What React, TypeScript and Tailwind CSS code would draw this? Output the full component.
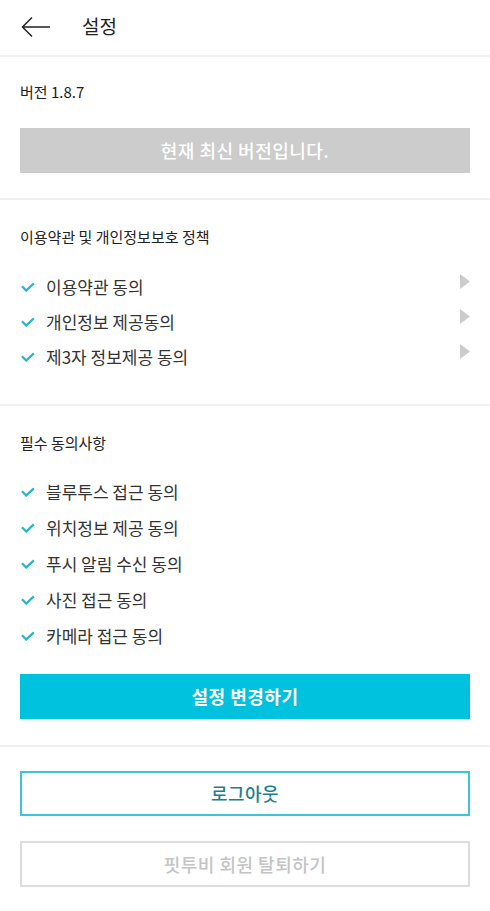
import React from "react";

const font = { fontFamily: '"Noto Sans CJK KR", "Noto Sans", sans-serif' };

function Check() {
  return (
    <svg width="14" height="10" viewBox="0 0 14 10" className="shrink-0">
      <path d="M1 4.3 L5.2 8.5 L12.8 1.3" fill="none" stroke="#2bb5c8" strokeWidth="2.3" />
    </svg>
  );
}

function Tri() {
  return (
    <svg width="10" height="15" viewBox="0 0 10 15" className="shrink-0 -mt-[11px]">
      <path d="M0 0 L10 7.5 L0 15 Z" fill="#cccccc" />
    </svg>
  );
}

function Item({ label, arrow, h }: { label: string; arrow?: boolean; h: string }) {
  return (
    <div className={`flex items-center ${h}`}>
      <div className="ml-[1px]">
        <Check />
      </div>
      <span className="ml-[11px] text-[17px] text-[#333333] flex-1">{label}</span>
      {arrow && <Tri />}
    </div>
  );
}

export default function App() {
  return (
    <div className="w-[490px] h-[911px] bg-white" style={font}>
      <div className="h-[57px] flex items-center border-b-2 border-[#f0f0f0] pb-[2px]">
        <svg width="30" height="22" viewBox="0 0 30 22" className="ml-[21px]">
          <path d="M29 11 H2 M11 1.5 L1.5 11 L11 20.5" fill="none" stroke="#222222" strokeWidth="1.5" />
        </svg>
        <span className="ml-[31px] text-[19px] text-[#222222]">설정</span>
      </div>

      <div className="px-5 pt-[25px] pb-[25px] border-b-2 border-[#f0f0f0]">
        <div className="text-[15px] leading-[20px] text-[#222222]">버전 1.8.7</div>
        <div className="mt-[26px] h-[45px] bg-[#cccccc] flex items-center justify-center text-white text-[18px] tracking-[0.5px] font-medium">
          현재 최신 버전입니다.
        </div>
      </div>

      <div className="px-5 pt-[27px] pb-[30px] border-b-2 border-[#f0f0f0]">
        <div className="text-[15px] leading-[20px] text-[#222222]">이용약관 및 개인정보보호 정책</div>
        <div className="mt-[22px]">
          <Item label="이용약관 동의" arrow h="h-[35px]" />
          <Item label="개인정보 제공동의" arrow h="h-[35px]" />
          <Item label="제3자 정보제공 동의" arrow h="h-[35px]" />
        </div>
      </div>

      <div className="px-5 pt-[27px] pb-[26px] border-b-2 border-[#f0f0f0]">
        <div className="text-[15px] leading-[20px] text-[#222222]">필수 동의사항</div>
        <div className="mt-[21px]">
          <Item label="블루투스 접근 동의" h="h-[36px]" />
          <Item label="위치정보 제공 동의" h="h-[36px]" />
          <Item label="푸시 알림 수신 동의" h="h-[36px]" />
          <Item label="사진 접근 동의" h="h-[36px]" />
          <Item label="카메라 접근 동의" h="h-[36px]" />
        </div>
        <div className="mt-[20px] h-[45px] bg-[#00c2de] flex items-center justify-center text-white text-[18px] tracking-[0.5px] font-bold">
          설정 변경하기
        </div>
      </div>

      <div className="px-5 pt-[24px]">
        <div className="h-[45px] border-2 border-[#3cc4d8] flex items-center justify-center text-[#1b7f8f] text-[18px] tracking-[0.5px] font-medium">
          로그아웃
        </div>
        <div className="mt-[25px] h-[46px] border-2 border-[#dddddd] flex items-center justify-center text-[#c4c4c4] text-[18px] tracking-[0.5px] font-medium">
          핏투비 회원 탈퇴하기
        </div>
      </div>
    </div>
  );
}
